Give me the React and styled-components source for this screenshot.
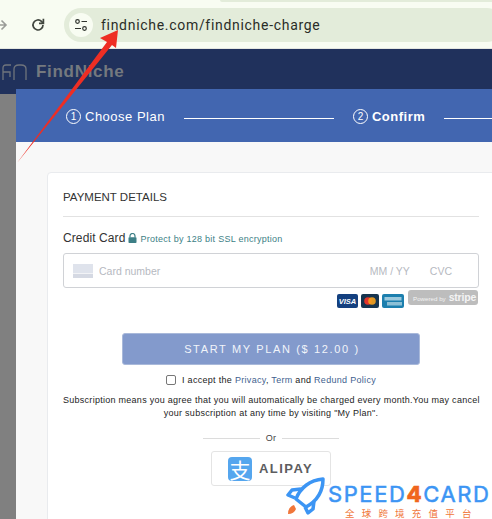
import React from 'react';
import styled, {createGlobalStyle} from 'styled-components';

const GlobalStyle = createGlobalStyle`
  html, body {
    margin: 0;
    padding: 0;
    width: 492px;
    height: 519px;
    overflow: hidden;
    background: #808080;
    font-family: "Liberation Sans", Arial, sans-serif;
  }
`

const Page = styled.div`
  position: relative;
  width: 492px;
  height: 519px;
  overflow: hidden;
`

const Toolbar = styled.div`
  position: relative;
  display: flex;
  align-items: center;
  height: 49px;
  padding-top: 1px;
  box-sizing: border-box;
  background: #f8fcf2;
  border-bottom: 1px solid #e4e6e0;

  /* bottom edge of the tab above the toolbar */
  &::before {
    content: '';
    position: absolute;
    left: 220px;
    right: 0;
    top: 0;
    height: 2px;
    border-radius: 0 0 0 3px;
    background: #e3ecda;
  }
`

const NavIcon = styled.svg`
  flex: none;
  margin-left: ${p => p.$left}px;
`

const UrlPill = styled.div`
  flex: none;
  display: flex;
  align-items: center;
  width: 440px;
  height: 34px;
  margin-left: 18px;
  padding-left: 5px;
  box-sizing: border-box;
  border-radius: 17px;
  background: #e3ecda;
`

const TuneBadge = styled.div`
  flex: none;
  display: flex;
  align-items: center;
  justify-content: center;
  width: 24px;
  height: 24px;
  border-radius: 50%;
  background: #f8fcf2;
`

const UrlText = styled.span`
  margin-left: 8px;
  font-family: "Roboto", "Liberation Sans", sans-serif;
  font-size: 14px;
  letter-spacing: 0.7px;
  color: #2a2c27;
`

const AppBar = styled.div`
  display: flex;
  align-items: center;
  gap: 8px;
  height: 40px;
  padding: 6px 0 0 2px;
  box-sizing: border-box;
  background: #20315c;
`

const Brand = styled.span`
  font-family: "Liberation Sans", sans-serif;
  font-weight: 700;
  font-size: 17px;
  letter-spacing: 0.7px;
  color: #74797f;
`

const Stage = styled.div`
  display: flex;
  height: 430px;
`

const Gutter = styled.div`
  flex: none;
  width: 16px;
  background: linear-gradient(#20315c 5px, #808080 5px);
`

const Modal = styled.div`
  flex: 1;
  min-width: 0;
  background: #f8f8f8;
`

const Steps = styled.div`
  display: flex;
  align-items: center;
  height: 53px;
  padding: 1px 0 0 50px;
  box-sizing: border-box;
  background: #4266b0;
  color: #fff;
  font-size: 13px;
  letter-spacing: 0.5px;
  white-space: nowrap;
`

const StepNumber = styled.span`
  display: inline-flex;
  align-items: center;
  justify-content: center;
  width: 13px;
  height: 13px;
  margin-right: 4px;
  border: 1px solid #fff;
  border-radius: 50%;
  font-size: 10px;
  letter-spacing: 0;
  font-weight: 400;
`

const Step = styled.span`
  display: inline-flex;
  align-items: center;
  font-weight: ${p => (p.$active ? 700 : 400)};
`

const StepLine = styled.span`
  flex: none;
  width: ${p => p.$width}px;
  height: 1px;
  margin: 4px ${p => p.$right}px 0 19px;
  background: #fff;
`

const Card = styled.div`
  width: 470px;
  margin: 30px 0 0 31px;
  padding: 0 15px;
  height: 400px;
  box-sizing: border-box;
  background: #fff;
  border: 1px solid #e9ebee;
  border-radius: 4px 0 0 0;
`

const CardBody = styled.div`
  width: 416px;
`

const CardTitle = styled.h2`
  margin: 0;
  height: 43px;
  line-height: 48px;
  border-bottom: 1px solid #e2e2e2;
  font-size: 11.5px;
  font-weight: 400;
  color: #333;
`

const CardLabelRow = styled.div`
  display: flex;
  align-items: center;
  gap: 3px;
  height: 20px;
  margin-top: 11px;
  font-size: 12px;
  letter-spacing: 0.1px;
  color: #333;
`

const SslNote = styled.span`
  padding-top: 1px;
  font-size: 9px;
  letter-spacing: 0.27px;
  color: #3d7f86;
`

const CardInput = styled.div`
  display: flex;
  align-items: center;
  height: 35px;
  margin-top: 5px;
  padding-left: 9px;
  box-sizing: border-box;
  border: 1px solid #d0d2d6;
  border-radius: 3px;
  font-size: 10.5px;
  color: #b6b9bf;
`

const CardGlyph = styled.div`
  flex: none;
  width: 20px;
  height: 14px;
  margin-right: 6px;
  background: linear-gradient(#dfe3ec 9px, #f2f3f6 9px, #f2f3f6 10px, #d5d9e3 10px);
`

const CardField = styled.span`
  margin-left: ${p => p.$auto ? 'auto' : '20px'};
  margin-right: ${p => p.$last ? '26px' : '0'};
`

const BadgeRow = styled.div`
  display: flex;
  align-items: flex-start;
  justify-content: flex-end;
  gap: 3px;
  height: 43px;
  margin-top: 2px;
`

const PayBadge = styled.svg`
  flex: none;
  margin-top: 4px;
`

const StripeBadge = styled.div`
  display: flex;
  align-items: baseline;
  gap: 3px;
  height: 15px;
  width: 70px;
  padding-left: 5px;
  box-sizing: border-box;
  margin: 0 1px 0 1px;
  border-radius: 3px;
  background: #bdbdbd;
  color: #f4f4f4;
  font-size: 6.2px;
  line-height: 15px;
  white-space: nowrap;
`

const StripeWord = styled.b`
  font-size: 10.5px;
  letter-spacing: -0.2px;
`

const SubmitButton = styled.button`
  display: block;
  width: 298px;
  height: 32px;
  margin: 0 auto;
  padding: 0 0 0 2px;
  border: 1px solid #a9b9da;
  border-radius: 3px;
  background: #839acc;
  color: #f1f4fa;
  font-family: inherit;
  font-size: 11px;
  letter-spacing: 1.65px;
`

const AcceptRow = styled.label`
  display: flex;
  align-items: center;
  justify-content: center;
  height: 14px;
  margin-top: 8px;
  font-size: 9px;
  letter-spacing: 0.3px;
  color: #222;
`

const CheckBox = styled.span`
  flex: none;
  width: 8px;
  height: 8px;
  margin-right: 6px;
  border: 1px solid #777;
  border-radius: 2px;
`

const PolicyLink = styled.span`
  color: #3f5f8f;
`

const Terms = styled.p`
  margin: 7px 0 0;
  font-size: 9px;
  line-height: 13px;
  letter-spacing: 0.27px;
  text-align: center;
  white-space: nowrap;
  color: #1d1d1d;
`

const OrRow = styled.div`
  display: flex;
  align-items: center;
  justify-content: center;
  gap: 6px;
  height: 14px;
  margin-top: 11px;
  font-size: 9px;
  letter-spacing: 0.3px;
  color: #444;
`

const OrLine = styled.span`
  width: 56.5px;
  height: 1px;
  background: #dcdcdc;
`

const AlipayButton = styled.div`
  display: flex;
  align-items: center;
  gap: 7px;
  width: 120px;
  height: 35px;
  margin: 6px auto 0;
  padding-left: 16px;
  box-sizing: border-box;
  border: 1px solid #e4e4e4;
  border-radius: 3px;
  background: #fff;
`

const AlipayMark = styled.div`
  flex: none;
  display: flex;
  align-items: center;
  justify-content: center;
  width: 24px;
  height: 24px;
  border-radius: 4px;
  background: #55a6ee;
  color: #fff;
  font-family: "Noto Sans CJK SC", sans-serif;
  font-size: 21px;
  line-height: 24px;
`

const AlipayWord = styled.span`
  font-size: 13px;
  font-weight: 700;
  letter-spacing: 1.45px;
  color: #5d5d5f;
`

const ArrowLayer = styled.svg`
  position: absolute;
  left: 0;
  top: 0;
  pointer-events: none;
`

const Watermark = styled.div`
  position: absolute;
  left: 286px;
  top: 476px;
  display: flex;
`

const WatermarkText = styled.div`
  margin: 6px 0 0 2px;
`

const WatermarkName = styled.div`
  font-family: "Inter", sans-serif;
  font-size: 22px;
  line-height: 24px;
  letter-spacing: 1.6px;
  font-weight: 400;
  color: #3c95f4;
  -webkit-text-stroke: 0.5px #3c95f4;
  white-space: nowrap;
`

const WatermarkFour = styled.span`
  color: #f0661e;
  -webkit-text-stroke: 0.5px #f0661e;
  font-weight: 800;
`

const WatermarkTag = styled.div`
  margin: 2px 0 0 17px;
  font-family: "Noto Sans CJK SC", sans-serif;
  font-size: 9.5px;
  line-height: 11px;
  letter-spacing: 7.2px;
  color: #f0763a;
  white-space: nowrap;
`

const App = () => (
  <Page>
    <GlobalStyle />
    <Toolbar>
      <NavIcon $left={-6} width="14" height="14" viewBox="0 0 14 14" fill="none" stroke="#9a9c98" strokeWidth="1.6">
        <path d="M1 7h11M7.5 2.5 12 7l-4.500 4.500" />
      </NavIcon>
      <NavIcon $left={22} width="16" height="16" viewBox="0 0 16 16" fill="none" stroke="#41463f" strokeWidth="1.7">
        <path d="M13 8a5 5 0 1 1-1.500-3.600L13 6" />
        <path d="M13.400 1.800V6.300H9" />
      </NavIcon>
      <UrlPill>
        <TuneBadge>
          <svg width="14" height="14" viewBox="0 0 14 14" fill="none" stroke="#30342e" strokeWidth="1.2">
            <circle cx="3.500" cy="3.500" r="1.800" />
            <path d="M7.500 3.500H13M1 10.500h6" />
            <circle cx="10.500" cy="10.500" r="1.800" />
          </svg>
        </TuneBadge>
        <UrlText>findniche.com/findniche-charge</UrlText>
      </UrlPill>
    </Toolbar>
    <AppBar>
      <svg width="26" height="18" viewBox="0 0 26 18" fill="none" stroke="#6f747c" strokeWidth="1.300">
        <path d="M1 17V5q0-3 3-3h5M1 9h7v5" />
        <path d="M12 17V6q0-4 5-4h2q5 0 5 4v11" />
      </svg>
      <Brand>FindNiche</Brand>
    </AppBar>
    <Stage>
      <Gutter />
      <Modal>
        <Steps>
          <Step><StepNumber>1</StepNumber>Choose Plan</Step>
          <StepLine $width={150} $right={19} />
          <Step $active><StepNumber>2</StepNumber>Confirm</Step>
          <StepLine $width={60} $right={0} />
        </Steps>
        <Card>
          <CardBody>
            <CardTitle>PAYMENT DETAILS</CardTitle>
            <CardLabelRow>
              Credit Card
              <svg width="9" height="10" viewBox="0 0 9 10">
                <path d="M2 4.500V3a2.500 2.500 0 0 1 5 0v1.500" fill="none" stroke="#3d7f86" strokeWidth="1.200" />
                <rect x="0.500" y="4.300" width="8" height="5.700" rx="0.800" fill="#3d7f86" />
              </svg>
              <SslNote>Protect by 128 bit SSL encryption</SslNote>
            </CardLabelRow>
            <CardInput>
              <CardGlyph />
              Card number
              <CardField $auto>MM / YY</CardField>
              <CardField $last>CVC</CardField>
            </CardInput>
            <BadgeRow>
              <PayBadge width="21" height="14" viewBox="0 0 21 14">
                <rect width="21" height="14" rx="2" fill="#14407f" />
                <text x="10.500" y="10" textAnchor="middle" fontSize="7.500" fontWeight="700" fontStyle="italic" fill="#fff" fontFamily="Liberation Sans">VISA</text>
              </PayBadge>
              <PayBadge width="18" height="14" viewBox="0 0 18 14">
                <rect width="18" height="14" rx="2" fill="#16344f" />
                <circle cx="7" cy="7" r="3.800" fill="#e2342b" />
                <circle cx="11" cy="7" r="3.800" fill="#f6a21d" opacity="0.900" />
              </PayBadge>
              <PayBadge width="22" height="14" viewBox="0 0 22 14">
                <rect width="22" height="14" rx="2" fill="#1c7fae" />
                <rect x="2.500" y="3" width="17" height="3.500" fill="#9cc9dd" />
                <rect x="5" y="8" width="15" height="3.500" fill="#8cc0d6" />
              </PayBadge>
              <StripeBadge>Powered by <StripeWord>stripe</StripeWord></StripeBadge>
            </BadgeRow>
            <SubmitButton>START MY PLAN ($ 12.00 )</SubmitButton>
            <AcceptRow>
              <CheckBox />
              <span>
                I accept the <PolicyLink>Privacy</PolicyLink>, <PolicyLink>Term</PolicyLink> and <PolicyLink>Redund Policy</PolicyLink>
              </span>
            </AcceptRow>
            <Terms>
              Subscription means you agree that you will automatically be charged every month.You may cancel<br />
              your subscription at any time by visiting "My Plan".
            </Terms>
            <OrRow>
              <OrLine />
              Or
              <OrLine />
            </OrRow>
            <AlipayButton>
              <AlipayMark>支</AlipayMark>
              <AlipayWord>ALIPAY</AlipayWord>
            </AlipayButton>
          </CardBody>
        </Card>
      </Modal>
    </Stage>
    <ArrowLayer width="492" height="519" viewBox="0 0 492 519">
      <polygon points="118,30 100,38 107,42 17,163 112,45 116,48" fill="#ee2e24" />
    </ArrowLayer>
    <Watermark>
      <svg width="40" height="40" viewBox="0 0 40 40" fill="none" stroke="#3c95f4" strokeWidth="3.500" strokeLinejoin="round">
        <path d="M10 23 C14 12 24 4 37 3 C37 15 31 25 20 31 Z" fill="#fff" />
        <path d="M15 13 6 14 2 19 9 22" />
        <path d="M28 25 27 33 22 37 19 31" />
        <path d="M2 38 Q2 31 8 29 L10 33 Q8 38 2 38Z" fill="#f0763a" stroke="none" />
      </svg>
      <WatermarkText>
        <WatermarkName>SPEED<WatermarkFour>4</WatermarkFour>CARD</WatermarkName>
        <WatermarkTag>全球跨境充值平台</WatermarkTag>
      </WatermarkText>
    </Watermark>
  </Page>
);

export default App;
